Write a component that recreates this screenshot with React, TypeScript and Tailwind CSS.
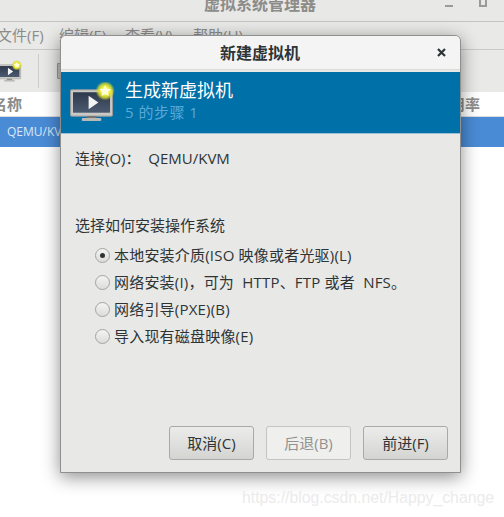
const FONT = "font-['Open_Sans','Noto_Sans_CJK_SC',sans-serif]";

const OPTIONS = [
  '本地安装介质(ISO 映像或者光驱)(L)',
  '网络安装(I)，可为  HTTP、FTP 或者  NFS。',
  '网络引导(PXE)(B)',
  '导入现有磁盘映像(E)',
];

function VmIcon({ className }: { className: string }) {
  return (
    <svg className={className} viewBox="0 0 46 40" fill="none">
      <defs>
        <linearGradient id="scr" x1="0" y1="0" x2="0" y2="1">
          <stop offset="0" stopColor="#2e3a4c" />
          <stop offset="1" stopColor="#4c5a70" />
        </linearGradient>
        <radialGradient id="glow">
          <stop offset="0.4" stopColor="#f8f83c" />
          <stop offset="0.72" stopColor="#dcdc30" stopOpacity="0.8" />
          <stop offset="1" stopColor="#c8d020" stopOpacity="0" />
        </radialGradient>
      </defs>
      <rect x="0.5" y="8" width="43" height="27" rx="1" fill="#c9c9c6" stroke="#9a9a98" />
      <rect x="3" y="10.5" width="38" height="21" fill="url(#scr)" />
      <path d="M19 14l0 14 10-7z" fill="#f4f4f4" />
      <rect x="17" y="35" width="10" height="2" fill="#77746e" />
      <rect x="12" y="37" width="20" height="3" rx="1" fill="#b9b9b6" />
      <circle cx="36" cy="9" r="10" fill="url(#glow)" />
      <path d="M36 3l1.8 3.8 4.2.5-3.1 2.9.8 4.1-3.7-2-3.7 2 .8-4.1-3.1-2.9 4.2-.5z" fill="#fffde0" />
    </svg>
  );
}

function Radio({ checked }: { checked: boolean }) {
  return (
    <span className="flex h-[15px] w-[15px] shrink-0 items-center justify-center rounded-full border border-[#a4a4a2] bg-gradient-to-b from-[#f4f4f3] to-[#dcdcda]">
      {checked && <span className="h-[5px] w-[5px] rounded-full bg-[#2e3436]" />}
    </span>
  );
}

function DialogButton({ label, disabled }: { label: string; disabled?: boolean }) {
  return (
    <div
      className={
        disabled
          ? 'flex h-[34px] w-[85px] items-center justify-center rounded-[3px] border border-[#c4c4c2] bg-[#efefee] text-[#92928f]'
          : 'flex h-[34px] w-[85px] items-center justify-center rounded-[3px] border border-[#a9a9a6] bg-gradient-to-b from-[#ececeb] to-[#d4d4d1] text-[#2e3436]'
      }
    >
      {label}
    </div>
  );
}

export default function App() {
  return (
    <div className={`relative h-[517px] w-[504px] overflow-hidden bg-white text-[15px] ${FONT}`}>
      {/* main window behind the dialog, washed out */}
      <div className="relative flex h-[22px] items-center justify-center overflow-hidden border-b border-[#c4c4c2] bg-[#e8e8e6] pb-[14px] pl-[16px] text-[16px] font-bold text-[#8c8c8a]">
        虚拟系统管理器
        <span className="absolute left-[445px] top-[5px] h-[2px] w-[8px] bg-[#9a9a98]" />
        <span className="absolute left-[479px] top-0 h-[7px] w-[8px] border-2 border-t-0 border-[#9a9a98]" />
      </div>
      <div className="flex h-[28px] items-center border-b border-[#c9c9c7] bg-[#e9e9e7] text-[15px] text-[#8c8c8a]">
        <span className="ml-[-3px] w-[62px]">文件(F)</span>
        <span className="w-[66px]">编辑(E)</span>
        <span className="w-[68px]">查看(V)</span>
        <span>帮助(H)</span>
      </div>
      <div className="flex h-[42px] items-center bg-[#e9e9e7]">
        <VmIcon className="ml-[-2px] h-[24px] w-[24px]" />
        <div className="ml-[16px] h-[34px] w-px bg-[#cdcdcb]" />
        <div className="ml-[18px] h-[16px] w-[12px] rounded-[1px] border border-[#9a9a98] bg-[#c4c4c2]" />
      </div>
      <div className="flex h-[25px] items-center justify-between border-b border-[#dcdcdc] bg-white font-bold text-[#8c8c8a]">
        <span className="ml-[-8px]">名称</span>
        <span className="mr-[24px]">用率</span>
      </div>
      <div className="flex h-[30px] items-center bg-[#4a8bd6] pl-[7px] text-[12px] text-[#dbe7f6]">QEMU/KVM</div>

      {/* dialog */}
      <div className="absolute left-[60px] top-[35px] flex h-[438px] w-[401px] flex-col overflow-hidden rounded-t-[6px] border border-[#8f8f8d] bg-[#e8e8e6] shadow-[0_4px_18px_rgba(0,0,0,0.45)]">
        <div className="flex h-[34px] shrink-0 items-center border-b border-[#dcdcda] bg-[#f4f4f4] pl-[22px]">
          <span className="flex-1 text-center text-[16px] font-bold text-[#2e3436]">新建虚拟机</span>
          <svg className="mr-[14px] h-[9px] w-[9px]" viewBox="0 0 9 9" stroke="#2e3436" strokeWidth="2.2">
            <path d="M1 1l7 7M8 1l-7 7" />
          </svg>
        </div>
        <div className="mt-[2px] flex h-[62px] shrink-0 items-center border-b border-[#9dbfd3] bg-[#0070a8] pb-[2px] pl-[9px]">
          <VmIcon className="h-[39px] w-[45px]" />
          <div className="mb-[4px] ml-[10px] flex flex-col">
            <span className="text-[18px] leading-[24px] text-white">生成新虚拟机</span>
            <span className="text-[15px] leading-[20px] tracking-[0.5px] text-[#5aa9d8]">5 的步骤 1</span>
          </div>
        </div>
        <div className="flex flex-1 flex-col px-[14px] pb-[12px] text-[#2e3436]">
          <div className="mt-[14px] leading-[20px]">连接(O)：&nbsp;&nbsp;QEMU/KVM</div>
          <div className="mt-[47px] leading-[20px]">选择如何安装操作系统</div>
          <div className="mt-[7px] flex flex-col pl-[20px]">
            {OPTIONS.map((label, i) => (
              <div key={label} className="flex h-[27px] items-center gap-[4px] whitespace-pre tracking-[0.2px]">
                <Radio checked={i === 0} />
                <span>{label}</span>
              </div>
            ))}
          </div>
          <div className="mt-auto mr-[-2px] flex justify-end gap-[12px]">
            <DialogButton label="取消(C)" />
            <DialogButton label="后退(B)" disabled />
            <DialogButton label="前进(F)" />
          </div>
        </div>
      </div>

      {/* watermark */}
      <span className="absolute left-[242px] top-[489px] font-['Liberation_Sans',sans-serif] text-[15.8px] leading-[18px] text-[#ebebeb]">
        https://blog.csdn.net/Happy_change
      </span>
    </div>
  );
}
